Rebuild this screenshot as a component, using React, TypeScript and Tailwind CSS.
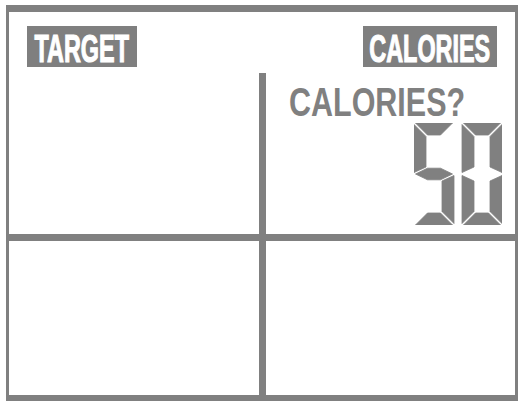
import React from "react";

const G = "#808080";

function Digit({ ox, segs }: { ox: number; segs: string }) {
  const S: Record<string, number[][]> = {
    a: [[1.5, 0], [38.5, 0], [26.5, 12], [13.5, 12]],
    b: [[40, 1.5], [28, 13.5], [28, 44], [40, 49.5]],
    c: [[40, 52.5], [28, 58], [28, 88.5], [40, 100.5]],
    d: [[1.5, 102], [38.5, 102], [26.5, 90], [13.5, 90]],
    e: [[0, 52.5], [12, 58], [12, 88.5], [0, 100.5]],
    f: [[0, 1.5], [12, 13.5], [12, 44], [0, 49.5]],
    g: [[1.5, 51], [13.5, 45.2], [26.5, 45.2], [38.5, 51], [26.5, 56.8], [13.5, 56.8]],
  };
  return (
    <g>
      {segs.split("").map((k) => (
        <polygon
          key={k}
          points={S[k].map(([x, y]) => `${x + ox},${y}`).join(" ")}
          fill={G}
          stroke={G}
          strokeWidth={0.8}
          strokeLinejoin="round"
        />
      ))}
    </g>
  );
}

function Label({ text, w }: { text: string; w: string }) {
  return (
    <div className={`${w} h-[41px] shrink-0 bg-[#7f7f7f] flex items-center justify-center pt-[3px] overflow-visible`}>
      <span
        className="text-white text-[39px] leading-none font-bold whitespace-nowrap scale-x-[0.6] inline-block [-webkit-text-stroke:1.2px_white]"
        style={{ fontFamily: '"Liberation Sans", Arial, sans-serif' }}
      >
        {text}
      </span>
    </div>
  );
}

export default function App() {
  return (
    <div className="w-[520px] h-[401px] bg-white overflow-hidden" style={{ fontFamily: '"Liberation Sans", Arial, sans-serif' }}>
      <div className="ml-[6px] mt-[5px] w-[512px] h-[396px] border-[#808080] border-t-[7px] border-l-[3px] border-r-[3px] border-b-[6px] flex flex-col">
        <div className="h-[222px] flex">
          <div className="w-[250px] shrink-0 pl-[18px] pt-[14px]">
            <Label text="TARGET" w="w-[110px]" />
          </div>
          <div className="w-[7px] shrink-0 mt-[61px] bg-[#808080]" />
          <div className="flex-1 min-w-0 flex flex-col pt-[14px]">
            <div className="flex justify-end pr-[18px]">
              <Label text="CALORIES" w="w-[134px]" />
            </div>
            <div className="mt-[15px] pl-[23px] h-[40px]">
              <span className="inline-block origin-left scale-x-[0.762] text-[40px] leading-[40px] font-bold text-[#808080] whitespace-nowrap">
                CALORIES?
              </span>
            </div>
            <div className="mt-[1px] flex justify-end pr-[13px]">
              <svg width="88" height="102" viewBox="0 0 88 102">
                <Digit ox={0} segs="afgcd" />
                <Digit ox={48} segs="abcdef" />
              </svg>
            </div>
          </div>
        </div>
        <div className="h-[7px] bg-[#808080]" />
        <div className="flex-1 flex">
          <div className="w-[250px] shrink-0" />
          <div className="w-[7px] shrink-0 bg-[#808080]" />
          <div className="flex-1" />
        </div>
      </div>
    </div>
  );
}
